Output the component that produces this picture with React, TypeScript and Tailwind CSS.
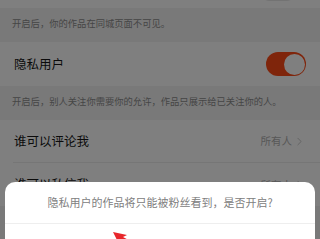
import { ChevronRight } from "lucide-react";

const font = { fontFamily: '"Noto Sans CJK SC", "Noto Sans", sans-serif' };

function Toggle({ on }: { on: boolean }) {
  return (
    <div
      className={
        "relative h-[24px] w-[40px] rounded-full " +
        (on ? "bg-[#fe4a16]" : "bg-[#e6e6e6]")
      }
    >
      <div
        className={
          "absolute top-[1.5px] h-[21px] w-[21px] rounded-full bg-white " +
          (on ? "right-[1.5px]" : "left-[1.5px]")
        }
      />
    </div>
  );
}

function Desc({ text }: { text: string }) {
  return (
    <div className="h-[34px] bg-[#f3f3f3] px-[12px] pt-[9px] text-[9.3px] leading-[12px] text-[#8c8c8c]">
      {text}
    </div>
  );
}

function LinkRow({ label, value, divider }: { label: string; value: string; divider?: boolean }) {
  return (
    <div className="bg-white pl-[13px]">
      <div
        className={
          "flex h-[43px] items-center justify-between pr-[14px] " +
          (divider ? "border-b border-[#ececec]" : "")
        }
      >
        <span className="pl-[1px] text-[12.5px] text-[#161616]">{label}</span>
        <span className="flex items-center text-[10.5px] text-[#b0b0b0]">
          {value}
          <ChevronRight size={13} strokeWidth={1.3} className="ml-[1px]" />
        </span>
      </div>
    </div>
  );
}

export default function App() {
  return (
    <div className="relative h-[239px] w-[320px] overflow-hidden bg-[#f3f3f3]" style={font}>
      <div className="-mt-[35px] flex h-[43px] items-end justify-end bg-white pb-[7px] pr-[22px]">
        <Toggle on={false} />
      </div>
      <Desc text="开启后，你的作品在同城页面不可见。" />
      <div className="flex h-[44px] items-center justify-between bg-white pl-[14px] pr-[14px]">
        <span className="text-[12.5px] text-[#161616]">隐私用户</span>
        <Toggle on={true} />
      </div>
      <Desc text="开启后，别人关注你需要你的允许，作品只展示给已关注你的人。" />
      <LinkRow label="谁可以评论我" value="所有人" divider />
      <LinkRow label="谁可以私信我" value="所有人" />

      <div className="absolute inset-0 bg-black/50" />

      <div className="absolute bottom-0 left-[5px] right-[5px] top-[182px] rounded-t-[10px] bg-white">
        <div className="flex h-[42px] items-center justify-center border-b border-[#eeeeee] text-[11px] text-[#808080]">
          隐私用户的作品将只能被粉丝看到，是否开启?
        </div>
        <svg
          className="absolute left-[107px] top-[49px]"
          width="30"
          height="12"
          viewBox="0 0 30 12"
        >
          <polygon points="1,1 15,4 11,6 22,12 14,12 8,8 6,11" fill="#e8262b" />
        </svg>
      </div>
    </div>
  );
}
